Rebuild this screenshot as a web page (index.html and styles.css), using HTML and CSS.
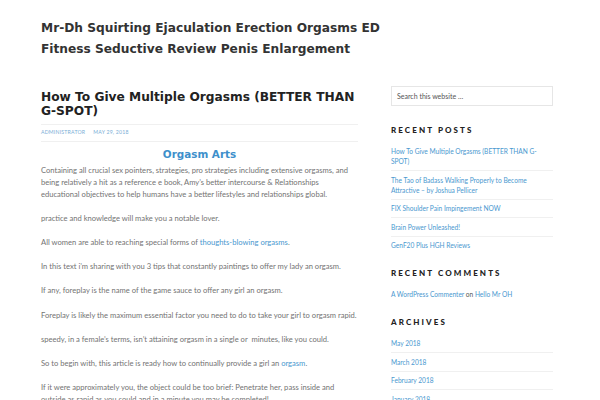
FILE: index.html
```html
<!DOCTYPE html>
<html lang="en">
<head>
<meta charset="utf-8">
<title>Mr-Dh Squirting Ejaculation Erection Orgasms ED Fitness Seductive Review Penis Enlargement</title>
<link rel="stylesheet" href="styles.css">
</head>
<body>
<header class="site-header">
  <p class="site-title">Mr-Dh Squirting Ejaculation Erection Orgasms ED Fitness Seductive Review Penis Enlargement</p>
</header>
<div class="site-inner">
  <main class="content">
    <article class="entry">
      <h1 class="entry-title">How To Give Multiple Orgasms (BETTER THAN G-SPOT)</h1>
      <p class="entry-meta"><a href="#">Administrator</a><a href="#">May 29, 2018</a></p>
      <div class="entry-content">
        <h2 class="arts">Orgasm Arts</h2>
        <p>Containing all crucial sex pointers, strategies, pro strategies including extensive orgasms, and being relatively a hit as a reference e book, Amy’s better intercourse &amp; Relationships educational objectives to help humans have a better lifestyles and relationships global.</p>
        <p>practice and knowledge will make you a notable lover.</p>
        <p>All women are able to reaching special forms of <a href="#">thoughts-blowing orgasms</a>.</p>
        <p>In this text i’m sharing with you 3 tips that constantly paintings to offer my lady an orgasm.</p>
        <p>If any, foreplay is the name of the game sauce to offer any girl an orgasm.</p>
        <p>Foreplay is likely the maximum essential factor you need to do to take your girl to orgasm rapid.</p>
        <p>speedy, in a female’s terms, isn’t attaining orgasm in a single or &nbsp;minutes, like you could.</p>
        <p>So to begin with, this article is ready how to continually provide a girl an <a href="#">orgasm</a>.</p>
        <p>If it were approximately you, the object could be too brief: Penetrate her, pass inside and outside as rapid as you could and in a minute you may be completed!</p>
      </div>
    </article>
  </main>
  <aside class="sidebar">
    <div class="search">Search this website …</div>
    <section class="widget">
      <h3 class="widget-title">Recent Posts</h3>
      <ul>
        <li><a href="#">How To Give Multiple Orgasms (BETTER THAN G-SPOT)</a></li>
        <li><a href="#">The Tao of Badass Walking Properly to Become Attractive – by Joshua Pellicer</a></li>
        <li><a href="#">FIX Shoulder Pain Impingement NOW</a></li>
        <li><a href="#">Brain Power Unleashed!</a></li>
        <li><a href="#">GenF20 Plus HGH Reviews</a></li>
      </ul>
    </section>
    <section class="widget">
      <h3 class="widget-title">Recent Comments</h3>
      <ul class="comments">
        <li><a href="#">A WordPress Commenter</a> on <a href="#">Hello Mr OH</a></li>
      </ul>
    </section>
    <section class="widget">
      <h3 class="widget-title">Archives</h3>
      <ul>
        <li><a href="#">May 2018</a></li>
        <li><a href="#">March 2018</a></li>
        <li><a href="#">February 2018</a></li>
        <li><a href="#">January 2018</a></li>
      </ul>
    </section>
  </aside>
</div>
</body>
</html>
```
FILE: styles.css
```css
html, body {
  margin: 0;
  padding: 0;
  background: #fff;
  overflow: hidden;
}
body {
  font-family: Lato, "Liberation Sans", sans-serif;
  color: #737373;
  font-size: 7.6px;
  line-height: 11.8px;
  width: 600px;
  height: 400px;
}
a {
  color: #4a98cf;
  text-decoration: none;
}
.site-header {
  padding: 18px 41px 0;
  height: 52px;
}
.site-title {
  margin: 0;
  font-family: "DejaVu Sans", sans-serif;
  font-weight: bold;
  font-size: 12.2px;
  line-height: 21px;
  color: #333;
  width: 360px;
}
.site-inner {
  display: flex;
  padding-left: 41px;
  gap: 33px;
  padding-top: 18px;
}
.content {
  width: 317px;
  flex: none;
}
.entry-title {
  margin: 0;
  padding-top: 2px;
  font-family: "DejaVu Sans", sans-serif;
  font-weight: bold;
  font-size: 12.2px;
  line-height: 14px;
  color: #222;
}
.entry-meta {
  margin: 6px 0 0;
  border-top: 1px solid #f0f0f0;
  border-bottom: 1px solid #f0f0f0;
  padding: 4px 0 5px;
  font-size: 5.2px;
  line-height: 7px;
  text-transform: uppercase;
  letter-spacing: 0.2px;
}
.entry-meta a {
  color: #7aaed6;
  margin-right: 8px;
}
.entry-content {
  padding-top: 5px;
}
.arts {
  margin: 0 0 4px;
  text-align: center;
  font-family: "DejaVu Sans", sans-serif;
  font-weight: bold;
  font-size: 10.4px;
  line-height: 14px;
  color: #3d8fcb;
}
.entry-content p {
  margin: 0 0 12.4px;
}
.sidebar {
  width: 162px;
  flex: none;
  margin-top: -2px;
}
.search {
  border: 1px solid #e6e6e6;
  height: 18px;
  line-height: 18px;
  padding-left: 5px;
  font-size: 7px;
  color: #555;
  margin-bottom: 19px;
}
.widget {
  margin-top: 14px;
}
.widget-title {
  margin: 0 0 11px;
  font-family: Lato, sans-serif;
  font-weight: 900;
  font-size: 8px;
  line-height: 10px;
  letter-spacing: 2.1px;
  text-transform: uppercase;
  color: #222;
}
.widget ul {
  list-style: none;
  margin: 0;
  padding: 0;
  font-size: 6.6px;
  line-height: 10px;
}
.widget li {
  border-bottom: 1px solid #f0f0f0;
  padding: 0 0 4px;
  margin-bottom: 3.5px;
}
.widget li:last-child {
  border-bottom: none;
}
.widget ul.comments li {
  color: #555;
}
```
